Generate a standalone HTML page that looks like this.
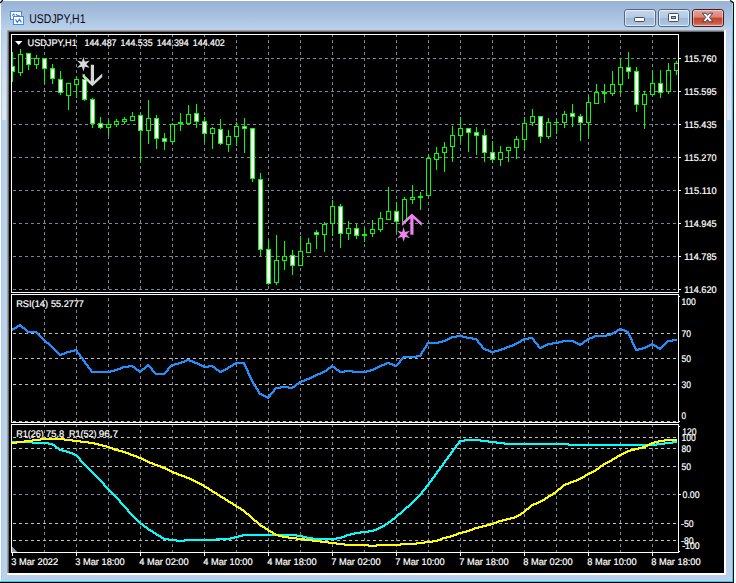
<!DOCTYPE html>
<html lang="en"><head><meta charset="utf-8"><title>USDJPY,H1</title>
<style>
html,body{margin:0;padding:0;background:#fff;overflow:hidden}
svg{display:block}
text{font-family:"Liberation Sans",sans-serif;fill:#fff;stroke:#fff;stroke-width:.2px;text-rendering:geometricPrecision}
.g{stroke:#778899;stroke-width:1;stroke-dasharray:3 3;fill:none}
.l{stroke:#c0c0c0;stroke-width:1;stroke-dasharray:3 3;fill:none}
.b{stroke:#fff;stroke-width:1;fill:none}
.c{fill:#00ff00}
.w{fill:#fff}
.k{fill:#000}
</style></head><body>
<svg width="736" height="583" viewBox="0 0 736 583">
<defs>
<linearGradient id="tb" x1="0" y1="0" x2="0" y2="1"><stop offset="0" stop-color="#98b2d4"/><stop offset="0.55" stop-color="#a9c2e0"/><stop offset="1" stop-color="#bad2ea"/></linearGradient>
<linearGradient id="bt" x1="0" y1="0" x2="0" y2="1"><stop offset="0" stop-color="#c4d6ec"/><stop offset="0.48" stop-color="#b4c9e3"/><stop offset="0.5" stop-color="#9db7d6"/><stop offset="1" stop-color="#b3cae5"/></linearGradient>
<linearGradient id="cl" x1="0" y1="0" x2="0" y2="1"><stop offset="0" stop-color="#eaa497"/><stop offset="0.45" stop-color="#d98576"/><stop offset="0.5" stop-color="#c0452b"/><stop offset="0.8" stop-color="#cb5a41"/><stop offset="1" stop-color="#e09a86"/></linearGradient>
<linearGradient id="gl" x1="0" y1="0" x2="0" y2="1"><stop offset="0" stop-color="#fff" stop-opacity="0"/><stop offset="0.5" stop-color="#fff" stop-opacity="0.3"/><stop offset="1" stop-color="#fff" stop-opacity="0.5"/></linearGradient>
<linearGradient id="gc" x1="0" y1="0" x2="0" y2="1"><stop offset="0" stop-color="#fff" stop-opacity="0.6"/><stop offset="1" stop-color="#fff" stop-opacity="0"/></linearGradient>
<clipPath id="m"><rect x="12" y="35" width="666" height="257"/></clipPath>
<clipPath id="r"><rect x="12" y="295" width="666" height="127"/></clipPath>
<clipPath id="s"><rect x="12" y="425" width="666" height="127"/></clipPath>
</defs>
<rect width="736" height="583" fill="#fff"/>

<path d="M1 583V4Q1 1 4 1H731Q734 1 734 4V583Z" fill="#000"/>
<path d="M1 582V4Q1 1 4 1H730Q733 1 733 4V582Z" fill="#2ccfff"/>
<path d="M1 581V4Q1 1 4 1H729Q732 1 732 4V581Z" fill="#b9d1ea"/>
<path d="M1 30V4Q1 1 4 1H729Q732 1 732 4V30Z" fill="url(#tb)"/>
<path d="M0 2.9L2.9 0M730.2 0.3L733.4 3.2" stroke="#1a1a1a" stroke-width="1.4" fill="none"/>
<rect x="732" y="3" width="1" height="30" fill="url(#gc)"/>
<rect x="2" y="30" width="4" height="90" fill="url(#gl)"/><rect x="727" y="30" width="5" height="90" fill="url(#gl)"/>
<g shape-rendering="crispEdges">
<rect x="0" y="581" width="2" height="1" fill="#2ccfff"/><rect x="0" y="582" width="2" height="1" fill="#000"/>
<rect x="1" y="30" width="1" height="551" fill="#afc8e6"/>
<rect x="731" y="30" width="1" height="551" fill="#c3cfe8"/><rect x="1" y="580" width="731" height="1" fill="#c3cfe8"/>
<rect x="7" y="30" width="719" height="545" fill="#fff"/>
<rect x="7" y="30" width="717" height="543" fill="#a0a0a0"/>
<rect x="8" y="31" width="716" height="542" fill="#696969"/>
<rect x="9" y="32" width="715" height="541" fill="#000"/>
<path class="g" clip-path="url(#m)" d="M44.5 34V292M76.5 34V292M108.5 34V292M140.5 34V292M172.5 34V292M204.5 34V292M236.5 34V292M268.5 34V292M300.5 34V292M332.5 34V292M364.5 34V292M396.5 34V292M428.5 34V292M460.5 34V292M492.5 34V292M524.5 34V292M556.5 34V292M588.5 34V292M620.5 34V292M652.5 34V292"/>
<path class="g" clip-path="url(#m)" d="M13 58.5H678M13 91.5H678M13 124.5H678M13 157.5H678M13 190.5H678M13 223.5H678M13 256.5H678M13 289.5H678"/>
<path class="g" clip-path="url(#r)" d="M44.5 292V422M76.5 292V422M108.5 292V422M140.5 292V422M172.5 292V422M204.5 292V422M236.5 292V422M268.5 292V422M300.5 292V422M332.5 292V422M364.5 292V422M396.5 292V422M428.5 292V422M460.5 292V422M492.5 292V422M524.5 292V422M556.5 292V422M588.5 292V422M620.5 292V422M652.5 292V422"/>
<path class="l" clip-path="url(#r)" d="M13 333.5H678M13 358.5H678M13 384.5H678M13 421.5H678"/>
<path class="g" clip-path="url(#s)" d="M44.5 424V552M76.5 424V552M108.5 424V552M140.5 424V552M172.5 424V552M204.5 424V552M236.5 424V552M268.5 424V552M300.5 424V552M332.5 424V552M364.5 424V552M396.5 424V552M428.5 424V552M460.5 424V552M492.5 424V552M524.5 424V552M556.5 424V552M588.5 424V552M620.5 424V552M652.5 424V552"/>
<path class="l" clip-path="url(#s)" d="M13 437.5H678M13 448.5H678M13 466.5H678M13 523.5H678M13 540.5H678"/>
<path class="g" d="M13 494.5H678"/>
<g clip-path="url(#m)">
<rect class="c" x="12" y="52" width="1" height="30"/>
<rect class="c" x="10" y="66" width="5" height="6"/>
<rect class="w" x="11" y="67" width="3" height="4"/>
<rect class="c" x="20" y="49" width="1" height="27"/>
<rect class="c" x="18" y="54" width="5" height="19"/>
<rect class="k" x="19" y="55" width="3" height="17"/>
<rect class="c" x="28" y="53" width="1" height="17"/>
<rect class="c" x="26" y="53" width="5" height="12"/>
<rect class="w" x="27" y="54" width="3" height="10"/>
<rect class="c" x="36" y="55" width="1" height="14"/>
<rect class="c" x="34" y="58" width="5" height="7"/>
<rect class="k" x="35" y="59" width="3" height="5"/>
<rect class="c" x="44" y="58" width="1" height="26"/>
<rect class="c" x="42" y="58" width="5" height="11"/>
<rect class="w" x="43" y="59" width="3" height="9"/>
<rect class="c" x="52" y="64" width="1" height="20"/>
<rect class="c" x="50" y="68" width="5" height="11"/>
<rect class="w" x="51" y="69" width="3" height="9"/>
<rect class="c" x="60" y="71" width="1" height="24"/>
<rect class="c" x="58" y="79" width="5" height="14"/>
<rect class="w" x="59" y="80" width="3" height="12"/>
<rect class="c" x="68" y="83" width="1" height="27"/>
<rect class="c" x="66" y="83" width="5" height="13"/>
<rect class="k" x="67" y="84" width="3" height="11"/>
<rect class="c" x="76" y="77" width="1" height="21"/>
<rect class="c" x="74" y="79" width="5" height="6"/>
<rect class="k" x="75" y="80" width="3" height="4"/>
<rect class="c" x="84" y="74" width="1" height="27"/>
<rect class="c" x="82" y="79" width="5" height="21"/>
<rect class="w" x="83" y="80" width="3" height="19"/>
<rect class="c" x="92" y="98" width="1" height="30"/>
<rect class="c" x="90" y="99" width="5" height="25"/>
<rect class="w" x="91" y="100" width="3" height="23"/>
<rect class="c" x="100" y="117" width="1" height="12"/>
<rect class="c" x="98" y="123" width="5" height="5"/>
<rect class="w" x="99" y="124" width="3" height="3"/>
<rect class="c" x="108" y="120" width="1" height="16"/>
<rect class="c" x="106" y="124" width="5" height="4"/>
<rect class="k" x="107" y="125" width="3" height="2"/>
<rect class="c" x="116" y="119" width="1" height="8"/>
<rect class="c" x="114" y="121" width="5" height="4"/>
<rect class="k" x="115" y="122" width="3" height="2"/>
<rect class="c" x="124" y="117" width="1" height="7"/>
<rect class="c" x="122" y="119" width="5" height="3"/>
<rect class="k" x="123" y="120" width="3" height="1"/>
<rect class="c" x="132" y="112" width="1" height="9"/>
<rect class="c" x="130" y="116" width="5" height="5"/>
<rect class="k" x="131" y="117" width="3" height="3"/>
<rect class="c" x="140" y="114" width="1" height="48"/>
<rect class="c" x="138" y="115" width="5" height="16"/>
<rect class="w" x="139" y="116" width="3" height="14"/>
<rect class="c" x="148" y="100" width="1" height="44"/>
<rect class="c" x="146" y="118" width="5" height="13"/>
<rect class="k" x="147" y="119" width="3" height="11"/>
<rect class="c" x="156" y="115" width="1" height="34"/>
<rect class="c" x="154" y="118" width="5" height="21"/>
<rect class="w" x="155" y="119" width="3" height="19"/>
<rect class="c" x="164" y="133" width="1" height="17"/>
<rect class="c" x="162" y="138" width="5" height="4"/>
<rect class="w" x="163" y="139" width="3" height="2"/>
<rect class="c" x="172" y="123" width="1" height="21"/>
<rect class="c" x="170" y="124" width="5" height="18"/>
<rect class="k" x="171" y="125" width="3" height="16"/>
<rect class="c" x="180" y="113" width="1" height="18"/>
<rect class="c" x="178" y="122" width="5" height="2"/>
<rect class="c" x="188" y="105" width="1" height="20"/>
<rect class="c" x="186" y="114" width="5" height="10"/>
<rect class="k" x="187" y="115" width="3" height="8"/>
<rect class="c" x="196" y="104" width="1" height="24"/>
<rect class="c" x="194" y="113" width="5" height="9"/>
<rect class="w" x="195" y="114" width="3" height="7"/>
<rect class="c" x="204" y="117" width="1" height="25"/>
<rect class="c" x="202" y="121" width="5" height="13"/>
<rect class="w" x="203" y="122" width="3" height="11"/>
<rect class="c" x="212" y="127" width="1" height="22"/>
<rect class="c" x="210" y="128" width="5" height="6"/>
<rect class="k" x="211" y="129" width="3" height="4"/>
<rect class="c" x="220" y="119" width="1" height="26"/>
<rect class="c" x="218" y="129" width="5" height="15"/>
<rect class="w" x="219" y="130" width="3" height="13"/>
<rect class="c" x="228" y="130" width="1" height="22"/>
<rect class="c" x="226" y="136" width="5" height="9"/>
<rect class="k" x="227" y="137" width="3" height="7"/>
<rect class="c" x="236" y="122" width="1" height="24"/>
<rect class="c" x="234" y="126" width="5" height="11"/>
<rect class="k" x="235" y="127" width="3" height="9"/>
<rect class="c" x="244" y="118" width="1" height="35"/>
<rect class="c" x="242" y="126" width="5" height="3"/>
<rect class="w" x="243" y="127" width="3" height="1"/>
<rect class="c" x="252" y="128" width="1" height="54"/>
<rect class="c" x="250" y="128" width="5" height="51"/>
<rect class="w" x="251" y="129" width="3" height="49"/>
<rect class="c" x="260" y="173" width="1" height="83"/>
<rect class="c" x="258" y="179" width="5" height="71"/>
<rect class="w" x="259" y="180" width="3" height="69"/>
<rect class="c" x="268" y="240" width="1" height="45"/>
<rect class="c" x="266" y="249" width="5" height="35"/>
<rect class="w" x="267" y="250" width="3" height="33"/>
<rect class="c" x="276" y="235" width="1" height="50"/>
<rect class="c" x="274" y="260" width="5" height="23"/>
<rect class="k" x="275" y="261" width="3" height="21"/>
<rect class="c" x="284" y="241" width="1" height="29"/>
<rect class="c" x="282" y="256" width="5" height="5"/>
<rect class="k" x="283" y="257" width="3" height="3"/>
<rect class="c" x="292" y="250" width="1" height="25"/>
<rect class="c" x="290" y="255" width="5" height="11"/>
<rect class="w" x="291" y="256" width="3" height="9"/>
<rect class="c" x="300" y="236" width="1" height="30"/>
<rect class="c" x="298" y="251" width="5" height="15"/>
<rect class="k" x="299" y="252" width="3" height="13"/>
<rect class="c" x="308" y="238" width="1" height="15"/>
<rect class="c" x="306" y="243" width="5" height="10"/>
<rect class="k" x="307" y="244" width="3" height="8"/>
<rect class="c" x="316" y="230" width="1" height="19"/>
<rect class="c" x="314" y="232" width="5" height="3"/>
<rect class="w" x="315" y="233" width="3" height="1"/>
<rect class="c" x="324" y="222" width="1" height="30"/>
<rect class="c" x="322" y="224" width="5" height="11"/>
<rect class="k" x="323" y="225" width="3" height="9"/>
<rect class="c" x="332" y="200" width="1" height="36"/>
<rect class="c" x="330" y="206" width="5" height="18"/>
<rect class="k" x="331" y="207" width="3" height="16"/>
<rect class="c" x="340" y="204" width="1" height="44"/>
<rect class="c" x="338" y="206" width="5" height="28"/>
<rect class="w" x="339" y="207" width="3" height="26"/>
<rect class="c" x="348" y="221" width="1" height="19"/>
<rect class="c" x="346" y="228" width="5" height="6"/>
<rect class="k" x="347" y="229" width="3" height="4"/>
<rect class="c" x="356" y="224" width="1" height="15"/>
<rect class="c" x="354" y="228" width="5" height="8"/>
<rect class="w" x="355" y="229" width="3" height="6"/>
<rect class="c" x="364" y="228" width="1" height="14"/>
<rect class="c" x="362" y="234" width="5" height="2"/>
<rect class="c" x="372" y="220" width="1" height="17"/>
<rect class="c" x="370" y="229" width="5" height="5"/>
<rect class="k" x="371" y="230" width="3" height="3"/>
<rect class="c" x="380" y="212" width="1" height="20"/>
<rect class="c" x="378" y="218" width="5" height="12"/>
<rect class="k" x="379" y="219" width="3" height="10"/>
<rect class="c" x="388" y="187" width="1" height="33"/>
<rect class="c" x="386" y="211" width="5" height="9"/>
<rect class="k" x="387" y="212" width="3" height="7"/>
<rect class="c" x="396" y="202" width="1" height="31"/>
<rect class="c" x="394" y="211" width="5" height="11"/>
<rect class="w" x="395" y="212" width="3" height="9"/>
<rect class="c" x="404" y="197" width="1" height="25"/>
<rect class="c" x="402" y="199" width="5" height="23"/>
<rect class="k" x="403" y="200" width="3" height="21"/>
<rect class="c" x="412" y="185" width="1" height="19"/>
<rect class="c" x="410" y="197" width="5" height="3"/>
<rect class="k" x="411" y="198" width="3" height="1"/>
<rect class="c" x="420" y="192" width="1" height="18"/>
<rect class="c" x="418" y="196" width="5" height="2"/>
<rect class="c" x="428" y="154" width="1" height="42"/>
<rect class="c" x="426" y="158" width="5" height="38"/>
<rect class="k" x="427" y="159" width="3" height="36"/>
<rect class="c" x="436" y="147" width="1" height="23"/>
<rect class="c" x="434" y="153" width="5" height="7"/>
<rect class="k" x="435" y="154" width="3" height="5"/>
<rect class="c" x="444" y="142" width="1" height="30"/>
<rect class="c" x="442" y="147" width="5" height="6"/>
<rect class="k" x="443" y="148" width="3" height="4"/>
<rect class="c" x="452" y="126" width="1" height="36"/>
<rect class="c" x="450" y="135" width="5" height="12"/>
<rect class="k" x="451" y="136" width="3" height="10"/>
<rect class="c" x="460" y="117" width="1" height="25"/>
<rect class="c" x="458" y="128" width="5" height="8"/>
<rect class="k" x="459" y="129" width="3" height="6"/>
<rect class="c" x="468" y="128" width="1" height="24"/>
<rect class="c" x="466" y="128" width="5" height="5"/>
<rect class="w" x="467" y="129" width="3" height="3"/>
<rect class="c" x="476" y="127" width="1" height="28"/>
<rect class="c" x="474" y="132" width="5" height="4"/>
<rect class="w" x="475" y="133" width="3" height="2"/>
<rect class="c" x="484" y="129" width="1" height="33"/>
<rect class="c" x="482" y="135" width="5" height="18"/>
<rect class="w" x="483" y="136" width="3" height="16"/>
<rect class="c" x="492" y="141" width="1" height="22"/>
<rect class="c" x="490" y="152" width="5" height="8"/>
<rect class="w" x="491" y="153" width="3" height="6"/>
<rect class="c" x="500" y="146" width="1" height="20"/>
<rect class="c" x="498" y="152" width="5" height="8"/>
<rect class="k" x="499" y="153" width="3" height="6"/>
<rect class="c" x="508" y="147" width="1" height="15"/>
<rect class="c" x="506" y="147" width="5" height="4"/>
<rect class="k" x="507" y="148" width="3" height="2"/>
<rect class="c" x="516" y="136" width="1" height="23"/>
<rect class="c" x="514" y="139" width="5" height="9"/>
<rect class="k" x="515" y="140" width="3" height="7"/>
<rect class="c" x="524" y="117" width="1" height="32"/>
<rect class="c" x="522" y="123" width="5" height="17"/>
<rect class="k" x="523" y="124" width="3" height="15"/>
<rect class="c" x="532" y="109" width="1" height="17"/>
<rect class="c" x="530" y="116" width="5" height="7"/>
<rect class="k" x="531" y="117" width="3" height="5"/>
<rect class="c" x="540" y="116" width="1" height="27"/>
<rect class="c" x="538" y="116" width="5" height="21"/>
<rect class="w" x="539" y="117" width="3" height="19"/>
<rect class="c" x="548" y="118" width="1" height="21"/>
<rect class="c" x="546" y="122" width="5" height="15"/>
<rect class="k" x="547" y="123" width="3" height="13"/>
<rect class="c" x="556" y="119" width="1" height="15"/>
<rect class="c" x="554" y="122" width="5" height="1"/>
<rect class="c" x="564" y="111" width="1" height="17"/>
<rect class="c" x="562" y="114" width="5" height="9"/>
<rect class="k" x="563" y="115" width="3" height="7"/>
<rect class="c" x="572" y="104" width="1" height="23"/>
<rect class="c" x="570" y="113" width="5" height="4"/>
<rect class="w" x="571" y="114" width="3" height="2"/>
<rect class="c" x="580" y="114" width="1" height="27"/>
<rect class="c" x="578" y="116" width="5" height="7"/>
<rect class="w" x="579" y="117" width="3" height="5"/>
<rect class="c" x="588" y="95" width="1" height="42"/>
<rect class="c" x="586" y="102" width="5" height="21"/>
<rect class="k" x="587" y="103" width="3" height="19"/>
<rect class="c" x="596" y="84" width="1" height="20"/>
<rect class="c" x="594" y="92" width="5" height="12"/>
<rect class="k" x="595" y="93" width="3" height="10"/>
<rect class="c" x="604" y="84" width="1" height="19"/>
<rect class="c" x="602" y="92" width="5" height="2"/>
<rect class="c" x="612" y="71" width="1" height="25"/>
<rect class="c" x="610" y="84" width="5" height="10"/>
<rect class="k" x="611" y="85" width="3" height="8"/>
<rect class="c" x="620" y="59" width="1" height="35"/>
<rect class="c" x="618" y="67" width="5" height="18"/>
<rect class="k" x="619" y="68" width="3" height="16"/>
<rect class="c" x="628" y="52" width="1" height="27"/>
<rect class="c" x="626" y="67" width="5" height="5"/>
<rect class="w" x="627" y="68" width="3" height="3"/>
<rect class="c" x="636" y="67" width="1" height="45"/>
<rect class="c" x="634" y="71" width="5" height="34"/>
<rect class="w" x="635" y="72" width="3" height="32"/>
<rect class="c" x="644" y="91" width="1" height="38"/>
<rect class="c" x="642" y="94" width="5" height="11"/>
<rect class="k" x="643" y="95" width="3" height="9"/>
<rect class="c" x="652" y="70" width="1" height="25"/>
<rect class="c" x="650" y="83" width="5" height="12"/>
<rect class="k" x="651" y="84" width="3" height="10"/>
<rect class="c" x="660" y="70" width="1" height="28"/>
<rect class="c" x="658" y="83" width="5" height="10"/>
<rect class="w" x="659" y="84" width="3" height="8"/>
<rect class="c" x="668" y="63" width="1" height="31"/>
<rect class="c" x="666" y="70" width="5" height="22"/>
<rect class="k" x="667" y="71" width="3" height="20"/>
<rect class="c" x="676" y="61" width="1" height="14"/>
<rect class="c" x="674" y="63" width="5" height="8"/>
<rect class="k" x="675" y="64" width="3" height="6"/>
</g>
</g>
<polygon points="83.40,56.90 84.85,61.69 89.72,60.55 86.30,64.20 89.72,67.85 84.85,66.71 83.40,71.50 81.95,66.71 77.08,67.85 80.50,64.20 77.08,60.55 81.95,61.69" fill="#d8d8d8"/>
<polygon points="92.4,86.2 102.2,77.0 102.2,73.6 94.0,81.2 94.0,64.8 90.8,64.8 90.8,81.2 82.6,73.6 82.6,77.0" fill="#d6d6d6"/>
<polygon points="403.60,227.10 405.05,231.89 409.92,230.75 406.50,234.40 409.92,238.05 405.05,236.91 403.60,241.70 402.15,236.91 397.28,238.05 400.70,234.40 397.28,230.75 402.15,231.89" fill="#ee82ee"/>
<polygon points="411.9,213.4 421.7,222.6 421.7,226.0 413.5,218.4 413.5,234.8 410.3,234.8 410.3,218.4 402.1,226.0 402.1,222.6" fill="#ee82ee"/>
<path shape-rendering="crispEdges" clip-path="url(#r)" d="M11 329h1v2h-1zM12 328h1v3h-1zM13 328h1v2h-1zM14 327h1v3h-1zM15 327h1v2h-1zM16 326h1v3h-1zM17 325h1v3h-1zM18 325h1v2h-1zM19 324h1v3h-1zM20 324h1v3h-1zM21 325h1v3h-1zM22 326h1v3h-1zM23 327h1v2h-1zM24 327h1v3h-1zM25 328h1v3h-1zM26 329h1v3h-1zM27 330h1v3h-1zM28 331h1v2h-1zM29 331h1v2h-1zM30 331h1v2h-1zM31 331h1v2h-1zM32 331h1v2h-1zM33 331h1v2h-1zM34 331h1v2h-1zM35 331h1v2h-1zM36 331h1v3h-1zM37 332h1v3h-1zM38 333h1v3h-1zM39 334h1v3h-1zM40 335h1v3h-1zM41 336h1v3h-1zM42 337h1v3h-1zM43 338h1v3h-1zM44 339h1v3h-1zM45 340h1v3h-1zM46 341h1v3h-1zM47 342h1v2h-1zM48 342h1v3h-1zM49 343h1v3h-1zM50 344h1v3h-1zM51 345h1v3h-1zM52 346h1v3h-1zM53 347h1v3h-1zM54 348h1v3h-1zM55 349h1v3h-1zM56 350h1v3h-1zM57 351h1v3h-1zM58 352h1v3h-1zM59 353h1v3h-1zM60 354h1v2h-1zM61 353h1v3h-1zM62 353h1v2h-1zM63 353h1v2h-1zM64 352h1v3h-1zM65 352h1v2h-1zM66 351h1v3h-1zM67 351h1v2h-1zM68 351h1v2h-1zM69 351h1v2h-1zM70 350h1v3h-1zM71 350h1v2h-1zM72 350h1v2h-1zM73 350h1v2h-1zM74 349h1v3h-1zM75 349h1v2h-1zM76 349h1v4h-1zM77 350h1v4h-1zM78 352h1v3h-1zM79 353h1v4h-1zM80 354h1v4h-1zM81 356h1v3h-1zM82 357h1v4h-1zM83 358h1v4h-1zM84 360h1v4h-1zM85 361h1v4h-1zM86 363h1v3h-1zM87 364h1v4h-1zM88 365h1v4h-1zM89 367h1v3h-1zM90 368h1v4h-1zM91 369h1v4h-1zM92 371h1v2h-1zM93 371h1v2h-1zM94 371h1v2h-1zM95 371h1v2h-1zM96 371h1v2h-1zM97 371h1v2h-1zM98 371h1v2h-1zM99 371h1v2h-1zM100 371h1v2h-1zM101 371h1v2h-1zM102 371h1v2h-1zM103 371h1v2h-1zM104 371h1v2h-1zM105 371h1v2h-1zM106 371h1v2h-1zM107 371h1v2h-1zM108 371h1v2h-1zM109 371h1v2h-1zM110 370h1v3h-1zM111 370h1v2h-1zM112 370h1v2h-1zM113 370h1v2h-1zM114 369h1v3h-1zM115 369h1v2h-1zM116 369h1v2h-1zM117 368h1v3h-1zM118 368h1v2h-1zM119 368h1v2h-1zM120 367h1v3h-1zM121 367h1v2h-1zM122 366h1v3h-1zM123 366h1v2h-1zM124 366h1v2h-1zM125 366h1v2h-1zM126 366h1v2h-1zM127 366h1v2h-1zM128 365h1v3h-1zM129 365h1v2h-1zM130 365h1v2h-1zM131 365h1v2h-1zM132 365h1v3h-1zM133 366h1v2h-1zM134 366h1v3h-1zM135 367h1v3h-1zM136 368h1v3h-1zM137 369h1v2h-1zM138 369h1v3h-1zM139 370h1v3h-1zM140 370h1v3h-1zM141 369h1v3h-1zM142 368h1v3h-1zM143 368h1v2h-1zM144 367h1v3h-1zM145 366h1v3h-1zM146 365h1v3h-1zM147 364h1v3h-1zM148 364h1v3h-1zM149 365h1v3h-1zM150 366h1v3h-1zM151 367h1v4h-1zM152 368h1v4h-1zM153 370h1v3h-1zM154 371h1v3h-1zM155 372h1v3h-1zM156 373h1v2h-1zM157 373h1v2h-1zM158 373h1v2h-1zM159 373h1v2h-1zM160 373h1v2h-1zM161 373h1v2h-1zM162 373h1v2h-1zM163 373h1v2h-1zM164 372h1v3h-1zM165 371h1v3h-1zM166 370h1v3h-1zM167 368h1v4h-1zM168 367h1v4h-1zM169 366h1v3h-1zM170 365h1v3h-1zM171 364h1v3h-1zM172 364h1v2h-1zM173 364h1v2h-1zM174 363h1v3h-1zM175 363h1v2h-1zM176 363h1v2h-1zM177 363h1v2h-1zM178 362h1v3h-1zM179 362h1v2h-1zM180 362h1v2h-1zM181 361h1v3h-1zM182 361h1v2h-1zM183 361h1v2h-1zM184 360h1v3h-1zM185 360h1v2h-1zM186 359h1v3h-1zM187 359h1v2h-1zM188 359h1v2h-1zM189 359h1v3h-1zM190 360h1v2h-1zM191 360h1v2h-1zM192 360h1v3h-1zM193 361h1v2h-1zM194 361h1v3h-1zM195 362h1v2h-1zM196 362h1v2h-1zM197 362h1v3h-1zM198 363h1v2h-1zM199 363h1v3h-1zM200 364h1v2h-1zM201 364h1v3h-1zM202 365h1v2h-1zM203 365h1v3h-1zM204 366h1v2h-1zM205 366h1v2h-1zM206 366h1v2h-1zM207 366h1v2h-1zM208 365h1v3h-1zM209 365h1v2h-1zM210 365h1v2h-1zM211 365h1v2h-1zM212 365h1v3h-1zM213 366h1v2h-1zM214 366h1v3h-1zM215 367h1v3h-1zM216 368h1v3h-1zM217 369h1v2h-1zM218 369h1v3h-1zM219 370h1v3h-1zM220 371h1v2h-1zM221 370h1v3h-1zM222 370h1v2h-1zM223 369h1v3h-1zM224 369h1v2h-1zM225 368h1v3h-1zM226 368h1v2h-1zM227 367h1v3h-1zM228 366h1v3h-1zM229 366h1v2h-1zM230 365h1v3h-1zM231 365h1v2h-1zM232 364h1v3h-1zM233 363h1v3h-1zM234 363h1v2h-1zM235 362h1v3h-1zM236 362h1v2h-1zM237 362h1v2h-1zM238 362h1v2h-1zM239 362h1v2h-1zM240 362h1v2h-1zM241 362h1v2h-1zM242 362h1v2h-1zM243 362h1v3h-1zM244 362h1v5h-1zM245 364h1v5h-1zM246 366h1v5h-1zM247 368h1v6h-1zM248 370h1v6h-1zM249 373h1v5h-1zM250 375h1v5h-1zM251 377h1v5h-1zM252 379h1v5h-1zM253 381h1v5h-1zM254 383h1v4h-1zM255 385h1v4h-1zM256 386h1v4h-1zM257 388h1v4h-1zM258 389h1v5h-1zM259 391h1v4h-1zM260 393h1v2h-1zM261 393h1v3h-1zM262 394h1v2h-1zM263 394h1v3h-1zM264 395h1v2h-1zM265 395h1v3h-1zM266 396h1v2h-1zM267 396h1v3h-1zM268 396h1v3h-1zM269 394h1v4h-1zM270 393h1v4h-1zM271 392h1v3h-1zM272 391h1v3h-1zM273 389h1v4h-1zM274 388h1v4h-1zM275 387h1v3h-1zM276 387h1v2h-1zM277 387h1v2h-1zM278 387h1v2h-1zM279 387h1v2h-1zM280 386h1v3h-1zM281 386h1v2h-1zM282 386h1v2h-1zM283 386h1v2h-1zM284 386h1v2h-1zM285 386h1v2h-1zM286 386h1v2h-1zM287 386h1v2h-1zM288 386h1v3h-1zM289 387h1v2h-1zM290 387h1v2h-1zM291 387h1v2h-1zM292 386h1v3h-1zM293 386h1v2h-1zM294 385h1v3h-1zM295 384h1v3h-1zM296 383h1v3h-1zM297 383h1v2h-1zM298 382h1v3h-1zM299 381h1v3h-1zM300 381h1v2h-1zM301 380h1v3h-1zM302 380h1v2h-1zM303 380h1v2h-1zM304 379h1v3h-1zM305 379h1v2h-1zM306 378h1v3h-1zM307 378h1v2h-1zM308 378h1v2h-1zM309 377h1v3h-1zM310 377h1v2h-1zM311 376h1v3h-1zM312 376h1v2h-1zM313 375h1v3h-1zM314 375h1v2h-1zM315 374h1v3h-1zM316 374h1v2h-1zM317 373h1v3h-1zM318 373h1v2h-1zM319 373h1v2h-1zM320 372h1v3h-1zM321 372h1v2h-1zM322 371h1v3h-1zM323 371h1v2h-1zM324 370h1v3h-1zM325 370h1v2h-1zM326 369h1v3h-1zM327 368h1v3h-1zM328 367h1v3h-1zM329 367h1v2h-1zM330 366h1v3h-1zM331 365h1v3h-1zM332 365h1v3h-1zM333 366h1v2h-1zM334 366h1v3h-1zM335 367h1v3h-1zM336 368h1v3h-1zM337 369h1v2h-1zM338 369h1v3h-1zM339 370h1v3h-1zM340 371h1v2h-1zM341 371h1v2h-1zM342 371h1v2h-1zM343 371h1v2h-1zM344 370h1v3h-1zM345 370h1v2h-1zM346 370h1v2h-1zM347 370h1v2h-1zM348 370h1v2h-1zM349 370h1v2h-1zM350 370h1v2h-1zM351 370h1v2h-1zM352 370h1v3h-1zM353 371h1v2h-1zM354 371h1v2h-1zM355 371h1v2h-1zM356 371h1v2h-1zM357 371h1v2h-1zM358 371h1v2h-1zM359 371h1v2h-1zM360 371h1v2h-1zM361 371h1v2h-1zM362 371h1v2h-1zM363 371h1v2h-1zM364 371h1v2h-1zM365 371h1v2h-1zM366 370h1v3h-1zM367 370h1v2h-1zM368 370h1v2h-1zM369 370h1v2h-1zM370 369h1v3h-1zM371 369h1v2h-1zM372 369h1v2h-1zM373 368h1v3h-1zM374 368h1v2h-1zM375 367h1v3h-1zM376 367h1v2h-1zM377 366h1v3h-1zM378 366h1v2h-1zM379 365h1v3h-1zM380 365h1v2h-1zM381 364h1v3h-1zM382 364h1v2h-1zM383 364h1v2h-1zM384 363h1v3h-1zM385 363h1v2h-1zM386 362h1v3h-1zM387 362h1v2h-1zM388 362h1v2h-1zM389 362h1v3h-1zM390 363h1v2h-1zM391 363h1v2h-1zM392 363h1v3h-1zM393 364h1v2h-1zM394 364h1v3h-1zM395 365h1v2h-1zM396 364h1v3h-1zM397 363h1v3h-1zM398 362h1v3h-1zM399 360h1v4h-1zM400 359h1v4h-1zM401 358h1v3h-1zM402 357h1v3h-1zM403 356h1v3h-1zM404 356h1v2h-1zM405 356h1v2h-1zM406 356h1v2h-1zM407 356h1v2h-1zM408 356h1v2h-1zM409 356h1v2h-1zM410 356h1v2h-1zM411 356h1v2h-1zM412 356h1v2h-1zM413 356h1v2h-1zM414 356h1v2h-1zM415 356h1v2h-1zM416 355h1v3h-1zM417 355h1v2h-1zM418 355h1v2h-1zM419 355h1v2h-1zM420 353h1v4h-1zM421 351h1v5h-1zM422 350h1v4h-1zM423 348h1v4h-1zM424 347h1v4h-1zM425 345h1v4h-1zM426 343h1v5h-1zM427 342h1v4h-1zM428 342h1v2h-1zM429 342h1v2h-1zM430 342h1v2h-1zM431 342h1v2h-1zM432 342h1v2h-1zM433 342h1v2h-1zM434 342h1v2h-1zM435 342h1v2h-1zM436 342h1v2h-1zM437 342h1v2h-1zM438 341h1v3h-1zM439 341h1v2h-1zM440 341h1v2h-1zM441 341h1v2h-1zM442 340h1v3h-1zM443 340h1v2h-1zM444 340h1v2h-1zM445 339h1v3h-1zM446 339h1v2h-1zM447 338h1v3h-1zM448 338h1v2h-1zM449 337h1v3h-1zM450 337h1v2h-1zM451 336h1v3h-1zM452 336h1v2h-1zM453 336h1v2h-1zM454 336h1v2h-1zM455 336h1v2h-1zM456 335h1v3h-1zM457 335h1v2h-1zM458 335h1v2h-1zM459 335h1v2h-1zM460 335h1v2h-1zM461 335h1v2h-1zM462 335h1v3h-1zM463 336h1v2h-1zM464 336h1v2h-1zM465 336h1v2h-1zM466 336h1v3h-1zM467 337h1v2h-1zM468 337h1v2h-1zM469 337h1v2h-1zM470 337h1v2h-1zM471 337h1v2h-1zM472 337h1v3h-1zM473 338h1v2h-1zM474 338h1v2h-1zM475 338h1v2h-1zM476 338h1v3h-1zM477 339h1v4h-1zM478 340h1v4h-1zM479 342h1v3h-1zM480 343h1v3h-1zM481 344h1v4h-1zM482 345h1v4h-1zM483 347h1v3h-1zM484 348h1v2h-1zM485 348h1v3h-1zM486 349h1v2h-1zM487 349h1v2h-1zM488 349h1v3h-1zM489 350h1v2h-1zM490 350h1v3h-1zM491 351h1v2h-1zM492 351h1v2h-1zM493 351h1v2h-1zM494 350h1v3h-1zM495 350h1v2h-1zM496 350h1v2h-1zM497 350h1v2h-1zM498 349h1v3h-1zM499 349h1v2h-1zM500 349h1v2h-1zM501 348h1v3h-1zM502 348h1v2h-1zM503 348h1v2h-1zM504 347h1v3h-1zM505 347h1v2h-1zM506 346h1v3h-1zM507 346h1v2h-1zM508 346h1v2h-1zM509 345h1v3h-1zM510 345h1v2h-1zM511 345h1v2h-1zM512 344h1v3h-1zM513 344h1v2h-1zM514 343h1v3h-1zM515 343h1v2h-1zM516 342h1v3h-1zM517 342h1v2h-1zM518 341h1v3h-1zM519 341h1v2h-1zM520 340h1v3h-1zM521 339h1v3h-1zM522 339h1v2h-1zM523 338h1v3h-1zM524 338h1v2h-1zM525 338h1v2h-1zM526 338h1v2h-1zM527 338h1v2h-1zM528 337h1v3h-1zM529 337h1v2h-1zM530 337h1v2h-1zM531 337h1v2h-1zM532 337h1v3h-1zM533 338h1v4h-1zM534 339h1v4h-1zM535 341h1v3h-1zM536 342h1v3h-1zM537 343h1v4h-1zM538 344h1v4h-1zM539 346h1v3h-1zM540 347h1v2h-1zM541 346h1v3h-1zM542 346h1v2h-1zM543 345h1v3h-1zM544 345h1v2h-1zM545 344h1v3h-1zM546 344h1v2h-1zM547 343h1v3h-1zM548 343h1v2h-1zM549 343h1v2h-1zM550 343h1v2h-1zM551 343h1v2h-1zM552 342h1v3h-1zM553 342h1v2h-1zM554 342h1v2h-1zM555 342h1v2h-1zM556 342h1v2h-1zM557 342h1v2h-1zM558 341h1v3h-1zM559 341h1v2h-1zM560 341h1v2h-1zM561 341h1v2h-1zM562 340h1v3h-1zM563 340h1v2h-1zM564 340h1v2h-1zM565 340h1v2h-1zM566 340h1v2h-1zM567 340h1v2h-1zM568 340h1v2h-1zM569 340h1v2h-1zM570 340h1v2h-1zM571 340h1v2h-1zM572 340h1v2h-1zM573 340h1v3h-1zM574 341h1v2h-1zM575 341h1v3h-1zM576 342h1v2h-1zM577 342h1v3h-1zM578 343h1v2h-1zM579 343h1v3h-1zM580 343h1v3h-1zM581 343h1v2h-1zM582 342h1v3h-1zM583 341h1v3h-1zM584 340h1v3h-1zM585 340h1v2h-1zM586 339h1v3h-1zM587 338h1v3h-1zM588 338h1v2h-1zM589 337h1v3h-1zM590 337h1v2h-1zM591 337h1v2h-1zM592 336h1v3h-1zM593 336h1v2h-1zM594 335h1v3h-1zM595 335h1v2h-1zM596 335h1v2h-1zM597 335h1v2h-1zM598 335h1v2h-1zM599 335h1v2h-1zM600 335h1v2h-1zM601 335h1v2h-1zM602 335h1v2h-1zM603 335h1v2h-1zM604 335h1v2h-1zM605 335h1v2h-1zM606 334h1v3h-1zM607 334h1v2h-1zM608 334h1v2h-1zM609 334h1v2h-1zM610 333h1v3h-1zM611 333h1v2h-1zM612 332h1v3h-1zM613 332h1v2h-1zM614 331h1v3h-1zM615 331h1v2h-1zM616 330h1v3h-1zM617 329h1v3h-1zM618 329h1v2h-1zM619 328h1v3h-1zM620 328h1v2h-1zM621 328h1v3h-1zM622 329h1v2h-1zM623 329h1v2h-1zM624 329h1v3h-1zM625 330h1v2h-1zM626 330h1v3h-1zM627 331h1v3h-1zM628 331h1v5h-1zM629 333h1v5h-1zM630 335h1v5h-1zM631 337h1v6h-1zM632 339h1v6h-1zM633 342h1v5h-1zM634 344h1v5h-1zM635 346h1v5h-1zM636 348h1v3h-1zM637 349h1v2h-1zM638 348h1v3h-1zM639 348h1v2h-1zM640 348h1v2h-1zM641 348h1v2h-1zM642 347h1v3h-1zM643 347h1v2h-1zM644 347h1v2h-1zM645 346h1v3h-1zM646 346h1v2h-1zM647 345h1v3h-1zM648 345h1v2h-1zM649 344h1v3h-1zM650 344h1v2h-1zM651 343h1v3h-1zM652 343h1v3h-1zM653 344h1v2h-1zM654 344h1v3h-1zM655 345h1v2h-1zM656 345h1v3h-1zM657 346h1v3h-1zM658 347h1v2h-1zM659 347h1v3h-1zM660 347h1v3h-1zM661 346h1v3h-1zM662 345h1v3h-1zM663 344h1v3h-1zM664 343h1v3h-1zM665 342h1v3h-1zM666 341h1v3h-1zM667 340h1v3h-1zM668 340h1v2h-1zM669 340h1v2h-1zM670 340h1v2h-1zM671 340h1v2h-1zM672 339h1v3h-1zM673 339h1v2h-1zM674 339h1v2h-1zM675 339h1v2h-1zM676 339h1v2h-1z" fill="#1e90ff"/>
<path shape-rendering="crispEdges" clip-path="url(#s)" d="M11 441h1v2h-1zM12 441h1v2h-1zM13 441h1v2h-1zM14 441h1v2h-1zM15 441h1v2h-1zM16 441h1v2h-1zM17 441h1v2h-1zM18 441h1v2h-1zM19 441h1v2h-1zM20 441h1v2h-1zM21 441h1v2h-1zM22 441h1v2h-1zM23 441h1v2h-1zM24 441h1v2h-1zM25 441h1v2h-1zM26 441h1v2h-1zM27 441h1v2h-1zM28 441h1v2h-1zM29 441h1v2h-1zM30 441h1v2h-1zM31 441h1v2h-1zM32 441h1v3h-1zM33 442h1v2h-1zM34 442h1v2h-1zM35 442h1v2h-1zM36 442h1v2h-1zM37 442h1v2h-1zM38 442h1v2h-1zM39 442h1v2h-1zM40 442h1v2h-1zM41 442h1v2h-1zM42 442h1v2h-1zM43 442h1v2h-1zM44 442h1v2h-1zM45 442h1v2h-1zM46 442h1v2h-1zM47 442h1v2h-1zM48 442h1v3h-1zM49 443h1v2h-1zM50 443h1v2h-1zM51 443h1v2h-1zM52 443h1v3h-1zM53 444h1v2h-1zM54 444h1v3h-1zM55 445h1v3h-1zM56 446h1v3h-1zM57 447h1v2h-1zM58 447h1v3h-1zM59 448h1v3h-1zM60 449h1v2h-1zM61 449h1v2h-1zM62 449h1v3h-1zM63 450h1v2h-1zM64 450h1v2h-1zM65 450h1v2h-1zM66 450h1v3h-1zM67 451h1v2h-1zM68 451h1v2h-1zM69 451h1v3h-1zM70 452h1v2h-1zM71 452h1v2h-1zM72 452h1v3h-1zM73 453h1v2h-1zM74 453h1v3h-1zM75 454h1v2h-1zM76 454h1v3h-1zM77 455h1v3h-1zM78 456h1v3h-1zM79 457h1v4h-1zM80 458h1v4h-1zM81 460h1v3h-1zM82 461h1v3h-1zM83 462h1v3h-1zM84 463h1v3h-1zM85 464h1v3h-1zM86 465h1v3h-1zM87 466h1v3h-1zM88 467h1v3h-1zM89 468h1v3h-1zM90 469h1v3h-1zM91 470h1v3h-1zM92 471h1v3h-1zM93 472h1v3h-1zM94 473h1v3h-1zM95 474h1v3h-1zM96 475h1v3h-1zM97 476h1v3h-1zM98 477h1v3h-1zM99 478h1v3h-1zM100 479h1v3h-1zM101 480h1v3h-1zM102 481h1v3h-1zM103 482h1v4h-1zM104 483h1v4h-1zM105 485h1v3h-1zM106 486h1v3h-1zM107 487h1v3h-1zM108 488h1v3h-1zM109 489h1v3h-1zM110 490h1v3h-1zM111 491h1v3h-1zM112 492h1v3h-1zM113 493h1v3h-1zM114 494h1v3h-1zM115 495h1v3h-1zM116 496h1v3h-1zM117 497h1v3h-1zM118 498h1v3h-1zM119 499h1v4h-1zM120 500h1v4h-1zM121 502h1v3h-1zM122 503h1v3h-1zM123 504h1v3h-1zM124 505h1v3h-1zM125 506h1v3h-1zM126 507h1v3h-1zM127 508h1v4h-1zM128 509h1v4h-1zM129 511h1v3h-1zM130 512h1v3h-1zM131 513h1v3h-1zM132 514h1v3h-1zM133 515h1v3h-1zM134 516h1v3h-1zM135 517h1v3h-1zM136 518h1v3h-1zM137 519h1v3h-1zM138 520h1v3h-1zM139 521h1v3h-1zM140 522h1v3h-1zM141 523h1v2h-1zM142 523h1v3h-1zM143 524h1v3h-1zM144 525h1v3h-1zM145 526h1v2h-1zM146 526h1v3h-1zM147 527h1v3h-1zM148 528h1v3h-1zM149 529h1v2h-1zM150 529h1v3h-1zM151 530h1v2h-1zM152 530h1v3h-1zM153 531h1v3h-1zM154 532h1v2h-1zM155 532h1v3h-1zM156 533h1v3h-1zM157 534h1v2h-1zM158 534h1v3h-1zM159 535h1v2h-1zM160 535h1v3h-1zM161 536h1v3h-1zM162 537h1v2h-1zM163 537h1v3h-1zM164 538h1v2h-1zM165 538h1v2h-1zM166 538h1v2h-1zM167 538h1v2h-1zM168 538h1v3h-1zM169 539h1v2h-1zM170 539h1v2h-1zM171 539h1v2h-1zM172 539h1v2h-1zM173 539h1v2h-1zM174 539h1v2h-1zM175 539h1v2h-1zM176 539h1v3h-1zM177 540h1v2h-1zM178 540h1v2h-1zM179 540h1v2h-1zM180 540h1v2h-1zM181 540h1v2h-1zM182 540h1v2h-1zM183 540h1v2h-1zM184 539h1v3h-1zM185 539h1v2h-1zM186 539h1v2h-1zM187 539h1v2h-1zM188 539h1v2h-1zM189 539h1v2h-1zM190 539h1v2h-1zM191 539h1v2h-1zM192 539h1v2h-1zM193 539h1v2h-1zM194 539h1v2h-1zM195 539h1v2h-1zM196 539h1v2h-1zM197 539h1v2h-1zM198 539h1v2h-1zM199 539h1v2h-1zM200 539h1v2h-1zM201 539h1v2h-1zM202 539h1v2h-1zM203 539h1v2h-1zM204 539h1v2h-1zM205 539h1v2h-1zM206 539h1v2h-1zM207 539h1v2h-1zM208 539h1v2h-1zM209 539h1v2h-1zM210 539h1v2h-1zM211 539h1v2h-1zM212 539h1v2h-1zM213 539h1v2h-1zM214 539h1v2h-1zM215 539h1v2h-1zM216 538h1v3h-1zM217 538h1v2h-1zM218 538h1v2h-1zM219 538h1v2h-1zM220 538h1v2h-1zM221 538h1v2h-1zM222 538h1v2h-1zM223 538h1v2h-1zM224 538h1v2h-1zM225 538h1v2h-1zM226 538h1v2h-1zM227 538h1v2h-1zM228 538h1v2h-1zM229 538h1v2h-1zM230 537h1v3h-1zM231 537h1v2h-1zM232 537h1v2h-1zM233 537h1v2h-1zM234 536h1v3h-1zM235 536h1v2h-1zM236 536h1v2h-1zM237 536h1v2h-1zM238 535h1v3h-1zM239 535h1v2h-1zM240 535h1v2h-1zM241 535h1v2h-1zM242 534h1v3h-1zM243 534h1v2h-1zM244 534h1v2h-1zM245 534h1v2h-1zM246 534h1v2h-1zM247 534h1v2h-1zM248 534h1v2h-1zM249 534h1v2h-1zM250 534h1v2h-1zM251 534h1v2h-1zM252 534h1v2h-1zM253 534h1v2h-1zM254 534h1v2h-1zM255 534h1v2h-1zM256 534h1v2h-1zM257 534h1v2h-1zM258 534h1v2h-1zM259 534h1v2h-1zM260 534h1v2h-1zM261 534h1v2h-1zM262 534h1v2h-1zM263 534h1v2h-1zM264 534h1v2h-1zM265 534h1v2h-1zM266 534h1v2h-1zM267 534h1v2h-1zM268 534h1v2h-1zM269 534h1v2h-1zM270 534h1v2h-1zM271 534h1v2h-1zM272 534h1v2h-1zM273 534h1v2h-1zM274 534h1v2h-1zM275 534h1v2h-1zM276 534h1v2h-1zM277 534h1v2h-1zM278 534h1v2h-1zM279 534h1v2h-1zM280 534h1v2h-1zM281 534h1v2h-1zM282 534h1v2h-1zM283 534h1v2h-1zM284 534h1v2h-1zM285 534h1v2h-1zM286 534h1v2h-1zM287 534h1v2h-1zM288 534h1v2h-1zM289 534h1v2h-1zM290 534h1v2h-1zM291 534h1v2h-1zM292 534h1v2h-1zM293 534h1v2h-1zM294 534h1v2h-1zM295 534h1v2h-1zM296 534h1v3h-1zM297 535h1v2h-1zM298 535h1v2h-1zM299 535h1v2h-1zM300 535h1v2h-1zM301 535h1v2h-1zM302 535h1v3h-1zM303 536h1v2h-1zM304 536h1v2h-1zM305 536h1v2h-1zM306 536h1v3h-1zM307 537h1v2h-1zM308 537h1v2h-1zM309 537h1v2h-1zM310 537h1v2h-1zM311 537h1v2h-1zM312 537h1v3h-1zM313 538h1v2h-1zM314 538h1v2h-1zM315 538h1v2h-1zM316 538h1v2h-1zM317 538h1v2h-1zM318 538h1v2h-1zM319 538h1v2h-1zM320 538h1v2h-1zM321 538h1v2h-1zM322 538h1v2h-1zM323 538h1v2h-1zM324 538h1v2h-1zM325 538h1v2h-1zM326 538h1v2h-1zM327 538h1v2h-1zM328 538h1v2h-1zM329 538h1v2h-1zM330 538h1v2h-1zM331 538h1v2h-1zM332 538h1v2h-1zM333 538h1v2h-1zM334 538h1v2h-1zM335 538h1v2h-1zM336 537h1v3h-1zM337 537h1v2h-1zM338 537h1v2h-1zM339 537h1v2h-1zM340 537h1v2h-1zM341 536h1v3h-1zM342 536h1v2h-1zM343 536h1v2h-1zM344 535h1v3h-1zM345 535h1v2h-1zM346 534h1v3h-1zM347 534h1v2h-1zM348 534h1v2h-1zM349 534h1v2h-1zM350 533h1v3h-1zM351 533h1v2h-1zM352 533h1v2h-1zM353 533h1v2h-1zM354 532h1v3h-1zM355 532h1v2h-1zM356 532h1v2h-1zM357 532h1v2h-1zM358 532h1v2h-1zM359 532h1v2h-1zM360 531h1v3h-1zM361 531h1v2h-1zM362 531h1v2h-1zM363 531h1v2h-1zM364 531h1v2h-1zM365 531h1v2h-1zM366 531h1v2h-1zM367 531h1v2h-1zM368 530h1v3h-1zM369 530h1v2h-1zM370 530h1v2h-1zM371 530h1v2h-1zM372 530h1v2h-1zM373 529h1v3h-1zM374 529h1v2h-1zM375 529h1v2h-1zM376 528h1v3h-1zM377 528h1v2h-1zM378 527h1v3h-1zM379 527h1v2h-1zM380 526h1v3h-1zM381 526h1v2h-1zM382 525h1v3h-1zM383 525h1v2h-1zM384 524h1v3h-1zM385 523h1v3h-1zM386 523h1v2h-1zM387 522h1v3h-1zM388 521h1v3h-1zM389 521h1v2h-1zM390 520h1v3h-1zM391 519h1v3h-1zM392 518h1v3h-1zM393 518h1v2h-1zM394 517h1v3h-1zM395 516h1v3h-1zM396 515h1v3h-1zM397 514h1v3h-1zM398 513h1v3h-1zM399 513h1v2h-1zM400 512h1v3h-1zM401 511h1v3h-1zM402 510h1v3h-1zM403 509h1v3h-1zM404 508h1v3h-1zM405 507h1v3h-1zM406 506h1v3h-1zM407 506h1v2h-1zM408 505h1v3h-1zM409 504h1v3h-1zM410 503h1v3h-1zM411 502h1v3h-1zM412 501h1v3h-1zM413 500h1v3h-1zM414 499h1v3h-1zM415 498h1v3h-1zM416 497h1v3h-1zM417 496h1v3h-1zM418 495h1v3h-1zM419 494h1v3h-1zM420 493h1v3h-1zM421 491h1v4h-1zM422 490h1v4h-1zM423 489h1v3h-1zM424 488h1v3h-1zM425 486h1v4h-1zM426 485h1v4h-1zM427 484h1v3h-1zM428 482h1v4h-1zM429 481h1v4h-1zM430 480h1v3h-1zM431 478h1v4h-1zM432 477h1v4h-1zM433 476h1v3h-1zM434 474h1v4h-1zM435 473h1v4h-1zM436 471h1v4h-1zM437 470h1v4h-1zM438 469h1v3h-1zM439 467h1v4h-1zM440 466h1v4h-1zM441 465h1v3h-1zM442 463h1v4h-1zM443 462h1v4h-1zM444 460h1v4h-1zM445 459h1v4h-1zM446 458h1v3h-1zM447 456h1v4h-1zM448 455h1v4h-1zM449 454h1v3h-1zM450 452h1v4h-1zM451 451h1v4h-1zM452 449h1v4h-1zM453 448h1v4h-1zM454 447h1v3h-1zM455 445h1v4h-1zM456 444h1v4h-1zM457 443h1v3h-1zM458 441h1v4h-1zM459 440h1v4h-1zM460 440h1v2h-1zM461 440h1v2h-1zM462 440h1v2h-1zM463 440h1v2h-1zM464 439h1v3h-1zM465 439h1v2h-1zM466 439h1v2h-1zM467 439h1v2h-1zM468 439h1v2h-1zM469 439h1v2h-1zM470 439h1v2h-1zM471 439h1v2h-1zM472 439h1v2h-1zM473 439h1v2h-1zM474 439h1v2h-1zM475 439h1v2h-1zM476 439h1v2h-1zM477 439h1v2h-1zM478 439h1v2h-1zM479 439h1v2h-1zM480 439h1v3h-1zM481 440h1v2h-1zM482 440h1v2h-1zM483 440h1v2h-1zM484 440h1v2h-1zM485 440h1v2h-1zM486 440h1v2h-1zM487 440h1v2h-1zM488 440h1v3h-1zM489 441h1v2h-1zM490 441h1v2h-1zM491 441h1v2h-1zM492 441h1v2h-1zM493 441h1v2h-1zM494 441h1v2h-1zM495 441h1v2h-1zM496 441h1v3h-1zM497 442h1v2h-1zM498 442h1v2h-1zM499 442h1v2h-1zM500 442h1v2h-1zM501 442h1v2h-1zM502 442h1v2h-1zM503 442h1v2h-1zM504 442h1v3h-1zM505 443h1v2h-1zM506 443h1v2h-1zM507 443h1v2h-1zM508 443h1v2h-1zM509 443h1v2h-1zM510 443h1v2h-1zM511 443h1v2h-1zM512 443h1v2h-1zM513 443h1v2h-1zM514 443h1v2h-1zM515 443h1v2h-1zM516 443h1v2h-1zM517 443h1v2h-1zM518 443h1v2h-1zM519 443h1v2h-1zM520 443h1v2h-1zM521 443h1v2h-1zM522 443h1v2h-1zM523 443h1v2h-1zM524 443h1v2h-1zM525 443h1v2h-1zM526 443h1v2h-1zM527 443h1v2h-1zM528 443h1v2h-1zM529 443h1v2h-1zM530 443h1v2h-1zM531 443h1v2h-1zM532 443h1v2h-1zM533 443h1v2h-1zM534 443h1v2h-1zM535 443h1v2h-1zM536 443h1v2h-1zM537 443h1v2h-1zM538 443h1v2h-1zM539 443h1v2h-1zM540 443h1v2h-1zM541 443h1v2h-1zM542 443h1v2h-1zM543 443h1v2h-1zM544 443h1v2h-1zM545 443h1v2h-1zM546 443h1v2h-1zM547 443h1v2h-1zM548 443h1v2h-1zM549 443h1v2h-1zM550 443h1v2h-1zM551 443h1v2h-1zM552 443h1v2h-1zM553 443h1v2h-1zM554 443h1v2h-1zM555 443h1v2h-1zM556 443h1v2h-1zM557 443h1v2h-1zM558 443h1v2h-1zM559 443h1v2h-1zM560 443h1v2h-1zM561 443h1v2h-1zM562 443h1v2h-1zM563 443h1v2h-1zM564 443h1v2h-1zM565 443h1v2h-1zM566 443h1v2h-1zM567 443h1v2h-1zM568 443h1v3h-1zM569 444h1v2h-1zM570 444h1v2h-1zM571 444h1v2h-1zM572 444h1v2h-1zM573 444h1v2h-1zM574 444h1v2h-1zM575 444h1v2h-1zM576 444h1v2h-1zM577 444h1v2h-1zM578 444h1v2h-1zM579 444h1v2h-1zM580 444h1v2h-1zM581 444h1v2h-1zM582 444h1v2h-1zM583 444h1v2h-1zM584 444h1v2h-1zM585 444h1v2h-1zM586 444h1v2h-1zM587 444h1v2h-1zM588 444h1v2h-1zM589 444h1v2h-1zM590 444h1v2h-1zM591 444h1v2h-1zM592 444h1v2h-1zM593 444h1v2h-1zM594 444h1v2h-1zM595 444h1v2h-1zM596 444h1v2h-1zM597 444h1v2h-1zM598 444h1v2h-1zM599 444h1v2h-1zM600 444h1v2h-1zM601 444h1v2h-1zM602 444h1v2h-1zM603 444h1v2h-1zM604 444h1v2h-1zM605 444h1v2h-1zM606 444h1v2h-1zM607 444h1v2h-1zM608 444h1v2h-1zM609 444h1v2h-1zM610 444h1v2h-1zM611 444h1v2h-1zM612 444h1v2h-1zM613 444h1v2h-1zM614 444h1v2h-1zM615 444h1v2h-1zM616 444h1v2h-1zM617 444h1v2h-1zM618 444h1v2h-1zM619 444h1v2h-1zM620 444h1v2h-1zM621 444h1v2h-1zM622 444h1v2h-1zM623 444h1v2h-1zM624 444h1v2h-1zM625 444h1v2h-1zM626 444h1v2h-1zM627 444h1v2h-1zM628 444h1v2h-1zM629 444h1v2h-1zM630 444h1v2h-1zM631 444h1v2h-1zM632 444h1v2h-1zM633 444h1v2h-1zM634 444h1v2h-1zM635 444h1v2h-1zM636 444h1v2h-1zM637 444h1v2h-1zM638 444h1v2h-1zM639 444h1v2h-1zM640 444h1v2h-1zM641 444h1v2h-1zM642 444h1v2h-1zM643 444h1v2h-1zM644 444h1v2h-1zM645 444h1v2h-1zM646 444h1v2h-1zM647 444h1v2h-1zM648 444h1v2h-1zM649 444h1v2h-1zM650 444h1v2h-1zM651 444h1v2h-1zM652 444h1v2h-1zM653 444h1v2h-1zM654 444h1v2h-1zM655 444h1v2h-1zM656 443h1v3h-1zM657 443h1v2h-1zM658 443h1v2h-1zM659 443h1v2h-1zM660 443h1v2h-1zM661 443h1v2h-1zM662 443h1v2h-1zM663 443h1v2h-1zM664 442h1v3h-1zM665 442h1v2h-1zM666 442h1v2h-1zM667 442h1v2h-1zM668 442h1v2h-1zM669 442h1v2h-1zM670 442h1v2h-1zM671 442h1v2h-1zM672 441h1v3h-1zM673 441h1v2h-1zM674 441h1v2h-1zM675 441h1v2h-1zM676 441h1v2h-1z" fill="#00ffff"/>
<path shape-rendering="crispEdges" clip-path="url(#s)" d="M11 442h1v2h-1zM12 442h1v2h-1zM13 442h1v2h-1zM14 442h1v2h-1zM15 442h1v2h-1zM16 441h1v3h-1zM17 441h1v2h-1zM18 441h1v2h-1zM19 441h1v2h-1zM20 441h1v2h-1zM21 441h1v2h-1zM22 441h1v2h-1zM23 441h1v2h-1zM24 440h1v3h-1zM25 440h1v2h-1zM26 440h1v2h-1zM27 440h1v2h-1zM28 440h1v2h-1zM29 440h1v2h-1zM30 440h1v2h-1zM31 440h1v2h-1zM32 439h1v3h-1zM33 439h1v2h-1zM34 439h1v2h-1zM35 439h1v2h-1zM36 439h1v2h-1zM37 439h1v2h-1zM38 439h1v2h-1zM39 439h1v2h-1zM40 438h1v3h-1zM41 438h1v2h-1zM42 438h1v2h-1zM43 438h1v2h-1zM44 438h1v2h-1zM45 438h1v2h-1zM46 438h1v2h-1zM47 438h1v2h-1zM48 438h1v2h-1zM49 438h1v2h-1zM50 438h1v2h-1zM51 438h1v2h-1zM52 438h1v2h-1zM53 438h1v2h-1zM54 438h1v2h-1zM55 438h1v2h-1zM56 438h1v2h-1zM57 438h1v2h-1zM58 438h1v2h-1zM59 438h1v2h-1zM60 438h1v2h-1zM61 438h1v2h-1zM62 438h1v2h-1zM63 438h1v2h-1zM64 438h1v3h-1zM65 439h1v2h-1zM66 439h1v2h-1zM67 439h1v2h-1zM68 439h1v2h-1zM69 439h1v2h-1zM70 439h1v2h-1zM71 439h1v2h-1zM72 439h1v3h-1zM73 440h1v2h-1zM74 440h1v2h-1zM75 440h1v2h-1zM76 440h1v2h-1zM77 440h1v2h-1zM78 440h1v2h-1zM79 440h1v2h-1zM80 440h1v3h-1zM81 441h1v2h-1zM82 441h1v2h-1zM83 441h1v2h-1zM84 441h1v2h-1zM85 441h1v2h-1zM86 441h1v2h-1zM87 441h1v2h-1zM88 441h1v3h-1zM89 442h1v2h-1zM90 442h1v2h-1zM91 442h1v2h-1zM92 442h1v2h-1zM93 442h1v2h-1zM94 442h1v3h-1zM95 443h1v2h-1zM96 443h1v2h-1zM97 443h1v2h-1zM98 443h1v3h-1zM99 444h1v2h-1zM100 444h1v2h-1zM101 444h1v2h-1zM102 444h1v3h-1zM103 445h1v2h-1zM104 445h1v2h-1zM105 445h1v2h-1zM106 445h1v3h-1zM107 446h1v2h-1zM108 446h1v2h-1zM109 446h1v3h-1zM110 447h1v2h-1zM111 447h1v2h-1zM112 447h1v3h-1zM113 448h1v2h-1zM114 448h1v3h-1zM115 449h1v2h-1zM116 449h1v2h-1zM117 449h1v2h-1zM118 449h1v3h-1zM119 450h1v2h-1zM120 450h1v2h-1zM121 450h1v2h-1zM122 450h1v3h-1zM123 451h1v2h-1zM124 451h1v2h-1zM125 451h1v3h-1zM126 452h1v2h-1zM127 452h1v2h-1zM128 452h1v3h-1zM129 453h1v2h-1zM130 453h1v3h-1zM131 454h1v2h-1zM132 454h1v2h-1zM133 454h1v3h-1zM134 455h1v2h-1zM135 455h1v2h-1zM136 455h1v3h-1zM137 456h1v2h-1zM138 456h1v3h-1zM139 457h1v2h-1zM140 457h1v2h-1zM141 457h1v3h-1zM142 458h1v2h-1zM143 458h1v3h-1zM144 459h1v2h-1zM145 459h1v3h-1zM146 460h1v2h-1zM147 460h1v3h-1zM148 461h1v2h-1zM149 461h1v3h-1zM150 462h1v2h-1zM151 462h1v2h-1zM152 462h1v3h-1zM153 463h1v2h-1zM154 463h1v3h-1zM155 464h1v2h-1zM156 464h1v2h-1zM157 464h1v3h-1zM158 465h1v2h-1zM159 465h1v2h-1zM160 465h1v3h-1zM161 466h1v2h-1zM162 466h1v3h-1zM163 467h1v2h-1zM164 467h1v2h-1zM165 467h1v3h-1zM166 468h1v2h-1zM167 468h1v3h-1zM168 469h1v2h-1zM169 469h1v3h-1zM170 470h1v2h-1zM171 470h1v3h-1zM172 471h1v2h-1zM173 471h1v3h-1zM174 472h1v2h-1zM175 472h1v2h-1zM176 472h1v3h-1zM177 473h1v2h-1zM178 473h1v3h-1zM179 474h1v2h-1zM180 474h1v2h-1zM181 474h1v3h-1zM182 475h1v2h-1zM183 475h1v2h-1zM184 475h1v3h-1zM185 476h1v2h-1zM186 476h1v3h-1zM187 477h1v2h-1zM188 477h1v2h-1zM189 477h1v3h-1zM190 478h1v2h-1zM191 478h1v3h-1zM192 479h1v2h-1zM193 479h1v3h-1zM194 480h1v2h-1zM195 480h1v3h-1zM196 481h1v2h-1zM197 481h1v3h-1zM198 482h1v2h-1zM199 482h1v3h-1zM200 483h1v2h-1zM201 483h1v3h-1zM202 484h1v2h-1zM203 484h1v3h-1zM204 485h1v3h-1zM205 486h1v2h-1zM206 486h1v3h-1zM207 487h1v2h-1zM208 487h1v3h-1zM209 488h1v3h-1zM210 489h1v2h-1zM211 489h1v3h-1zM212 490h1v3h-1zM213 491h1v2h-1zM214 491h1v3h-1zM215 492h1v2h-1zM216 492h1v3h-1zM217 493h1v3h-1zM218 494h1v2h-1zM219 494h1v3h-1zM220 495h1v3h-1zM221 496h1v2h-1zM222 496h1v3h-1zM223 497h1v2h-1zM224 497h1v3h-1zM225 498h1v3h-1zM226 499h1v2h-1zM227 499h1v3h-1zM228 500h1v3h-1zM229 501h1v2h-1zM230 501h1v3h-1zM231 502h1v2h-1zM232 502h1v3h-1zM233 503h1v3h-1zM234 504h1v2h-1zM235 504h1v3h-1zM236 505h1v3h-1zM237 506h1v2h-1zM238 506h1v3h-1zM239 507h1v2h-1zM240 507h1v3h-1zM241 508h1v3h-1zM242 509h1v2h-1zM243 509h1v3h-1zM244 510h1v3h-1zM245 511h1v3h-1zM246 512h1v3h-1zM247 513h1v2h-1zM248 513h1v3h-1zM249 514h1v3h-1zM250 515h1v3h-1zM251 516h1v3h-1zM252 517h1v3h-1zM253 518h1v3h-1zM254 519h1v3h-1zM255 520h1v2h-1zM256 520h1v3h-1zM257 521h1v3h-1zM258 522h1v3h-1zM259 523h1v3h-1zM260 524h1v3h-1zM261 525h1v2h-1zM262 525h1v3h-1zM263 526h1v2h-1zM264 526h1v3h-1zM265 527h1v3h-1zM266 528h1v2h-1zM267 528h1v3h-1zM268 529h1v3h-1zM269 530h1v2h-1zM270 530h1v3h-1zM271 531h1v2h-1zM272 531h1v3h-1zM273 532h1v3h-1zM274 533h1v2h-1zM275 533h1v3h-1zM276 534h1v2h-1zM277 534h1v2h-1zM278 534h1v3h-1zM279 535h1v2h-1zM280 535h1v2h-1zM281 535h1v2h-1zM282 535h1v3h-1zM283 536h1v2h-1zM284 536h1v2h-1zM285 536h1v2h-1zM286 536h1v2h-1zM287 536h1v2h-1zM288 536h1v3h-1zM289 537h1v2h-1zM290 537h1v2h-1zM291 537h1v2h-1zM292 537h1v2h-1zM293 537h1v2h-1zM294 537h1v2h-1zM295 537h1v2h-1zM296 537h1v3h-1zM297 538h1v2h-1zM298 538h1v2h-1zM299 538h1v2h-1zM300 538h1v2h-1zM301 538h1v2h-1zM302 538h1v2h-1zM303 538h1v2h-1zM304 538h1v3h-1zM305 539h1v2h-1zM306 539h1v2h-1zM307 539h1v2h-1zM308 539h1v2h-1zM309 539h1v2h-1zM310 539h1v2h-1zM311 539h1v2h-1zM312 539h1v3h-1zM313 540h1v2h-1zM314 540h1v2h-1zM315 540h1v2h-1zM316 540h1v2h-1zM317 540h1v2h-1zM318 540h1v2h-1zM319 540h1v2h-1zM320 540h1v3h-1zM321 541h1v2h-1zM322 541h1v2h-1zM323 541h1v2h-1zM324 541h1v2h-1zM325 541h1v2h-1zM326 541h1v2h-1zM327 541h1v2h-1zM328 541h1v3h-1zM329 542h1v2h-1zM330 542h1v2h-1zM331 542h1v2h-1zM332 542h1v2h-1zM333 542h1v2h-1zM334 542h1v2h-1zM335 542h1v2h-1zM336 542h1v3h-1zM337 543h1v2h-1zM338 543h1v2h-1zM339 543h1v2h-1zM340 543h1v2h-1zM341 543h1v2h-1zM342 543h1v2h-1zM343 543h1v2h-1zM344 543h1v3h-1zM345 544h1v2h-1zM346 544h1v2h-1zM347 544h1v2h-1zM348 544h1v2h-1zM349 544h1v2h-1zM350 544h1v2h-1zM351 544h1v2h-1zM352 544h1v2h-1zM353 544h1v2h-1zM354 544h1v2h-1zM355 544h1v2h-1zM356 544h1v2h-1zM357 544h1v2h-1zM358 544h1v2h-1zM359 544h1v2h-1zM360 544h1v2h-1zM361 544h1v2h-1zM362 544h1v2h-1zM363 544h1v2h-1zM364 544h1v2h-1zM365 544h1v2h-1zM366 544h1v2h-1zM367 544h1v2h-1zM368 544h1v3h-1zM369 545h1v2h-1zM370 545h1v2h-1zM371 545h1v2h-1zM372 545h1v2h-1zM373 545h1v2h-1zM374 545h1v2h-1zM375 545h1v2h-1zM376 544h1v3h-1zM377 544h1v2h-1zM378 544h1v2h-1zM379 544h1v2h-1zM380 544h1v2h-1zM381 544h1v2h-1zM382 544h1v2h-1zM383 544h1v2h-1zM384 544h1v2h-1zM385 544h1v2h-1zM386 544h1v2h-1zM387 544h1v2h-1zM388 544h1v2h-1zM389 544h1v2h-1zM390 544h1v2h-1zM391 544h1v2h-1zM392 544h1v2h-1zM393 544h1v2h-1zM394 544h1v2h-1zM395 544h1v2h-1zM396 544h1v2h-1zM397 544h1v2h-1zM398 544h1v2h-1zM399 544h1v2h-1zM400 543h1v3h-1zM401 543h1v2h-1zM402 543h1v2h-1zM403 543h1v2h-1zM404 543h1v2h-1zM405 543h1v2h-1zM406 543h1v2h-1zM407 543h1v2h-1zM408 543h1v2h-1zM409 543h1v2h-1zM410 543h1v2h-1zM411 543h1v2h-1zM412 543h1v2h-1zM413 543h1v2h-1zM414 543h1v2h-1zM415 543h1v2h-1zM416 542h1v3h-1zM417 542h1v2h-1zM418 542h1v2h-1zM419 542h1v2h-1zM420 542h1v2h-1zM421 542h1v2h-1zM422 542h1v2h-1zM423 542h1v2h-1zM424 541h1v3h-1zM425 541h1v2h-1zM426 541h1v2h-1zM427 541h1v2h-1zM428 541h1v2h-1zM429 541h1v2h-1zM430 541h1v2h-1zM431 541h1v2h-1zM432 540h1v3h-1zM433 540h1v2h-1zM434 540h1v2h-1zM435 540h1v2h-1zM436 540h1v2h-1zM437 539h1v3h-1zM438 539h1v2h-1zM439 539h1v2h-1zM440 538h1v3h-1zM441 538h1v2h-1zM442 537h1v3h-1zM443 537h1v2h-1zM444 537h1v2h-1zM445 537h1v2h-1zM446 536h1v3h-1zM447 536h1v2h-1zM448 536h1v2h-1zM449 536h1v2h-1zM450 535h1v3h-1zM451 535h1v2h-1zM452 535h1v2h-1zM453 534h1v3h-1zM454 534h1v2h-1zM455 534h1v2h-1zM456 533h1v3h-1zM457 533h1v2h-1zM458 532h1v3h-1zM459 532h1v2h-1zM460 532h1v2h-1zM461 532h1v2h-1zM462 531h1v3h-1zM463 531h1v2h-1zM464 531h1v2h-1zM465 531h1v2h-1zM466 530h1v3h-1zM467 530h1v2h-1zM468 530h1v2h-1zM469 529h1v3h-1zM470 529h1v2h-1zM471 529h1v2h-1zM472 528h1v3h-1zM473 528h1v2h-1zM474 527h1v3h-1zM475 527h1v2h-1zM476 527h1v2h-1zM477 527h1v2h-1zM478 526h1v3h-1zM479 526h1v2h-1zM480 526h1v2h-1zM481 526h1v2h-1zM482 525h1v3h-1zM483 525h1v2h-1zM484 525h1v2h-1zM485 525h1v2h-1zM486 524h1v3h-1zM487 524h1v2h-1zM488 524h1v2h-1zM489 524h1v2h-1zM490 523h1v3h-1zM491 523h1v2h-1zM492 523h1v2h-1zM493 522h1v3h-1zM494 522h1v2h-1zM495 522h1v2h-1zM496 521h1v3h-1zM497 521h1v2h-1zM498 520h1v3h-1zM499 520h1v2h-1zM500 520h1v2h-1zM501 520h1v2h-1zM502 519h1v3h-1zM503 519h1v2h-1zM504 519h1v2h-1zM505 519h1v2h-1zM506 518h1v3h-1zM507 518h1v2h-1zM508 518h1v2h-1zM509 518h1v2h-1zM510 517h1v3h-1zM511 517h1v2h-1zM512 517h1v2h-1zM513 517h1v2h-1zM514 516h1v3h-1zM515 516h1v2h-1zM516 515h1v3h-1zM517 515h1v2h-1zM518 514h1v3h-1zM519 514h1v2h-1zM520 513h1v3h-1zM521 512h1v3h-1zM522 512h1v2h-1zM523 511h1v3h-1zM524 510h1v3h-1zM525 509h1v3h-1zM526 508h1v3h-1zM527 508h1v2h-1zM528 507h1v3h-1zM529 506h1v3h-1zM530 505h1v3h-1zM531 504h1v3h-1zM532 504h1v2h-1zM533 503h1v3h-1zM534 503h1v2h-1zM535 503h1v2h-1zM536 502h1v3h-1zM537 502h1v2h-1zM538 501h1v3h-1zM539 501h1v2h-1zM540 500h1v3h-1zM541 500h1v2h-1zM542 499h1v3h-1zM543 499h1v2h-1zM544 498h1v3h-1zM545 497h1v3h-1zM546 497h1v2h-1zM547 496h1v3h-1zM548 495h1v3h-1zM549 495h1v2h-1zM550 494h1v3h-1zM551 494h1v2h-1zM552 493h1v3h-1zM553 492h1v3h-1zM554 492h1v2h-1zM555 491h1v3h-1zM556 490h1v3h-1zM557 489h1v3h-1zM558 488h1v3h-1zM559 488h1v2h-1zM560 487h1v3h-1zM561 486h1v3h-1zM562 485h1v3h-1zM563 484h1v3h-1zM564 484h1v2h-1zM565 483h1v3h-1zM566 483h1v2h-1zM567 483h1v2h-1zM568 482h1v3h-1zM569 482h1v2h-1zM570 481h1v3h-1zM571 481h1v2h-1zM572 481h1v2h-1zM573 480h1v3h-1zM574 480h1v2h-1zM575 480h1v2h-1zM576 479h1v3h-1zM577 479h1v2h-1zM578 478h1v3h-1zM579 478h1v2h-1zM580 477h1v3h-1zM581 477h1v2h-1zM582 476h1v3h-1zM583 476h1v2h-1zM584 475h1v3h-1zM585 474h1v3h-1zM586 474h1v2h-1zM587 473h1v3h-1zM588 473h1v2h-1zM589 472h1v3h-1zM590 472h1v2h-1zM591 471h1v3h-1zM592 471h1v2h-1zM593 470h1v3h-1zM594 470h1v2h-1zM595 469h1v3h-1zM596 468h1v3h-1zM597 468h1v2h-1zM598 467h1v3h-1zM599 466h1v3h-1zM600 465h1v3h-1zM601 465h1v2h-1zM602 464h1v3h-1zM603 463h1v3h-1zM604 463h1v2h-1zM605 462h1v3h-1zM606 462h1v2h-1zM607 461h1v3h-1zM608 461h1v2h-1zM609 460h1v3h-1zM610 460h1v2h-1zM611 459h1v3h-1zM612 458h1v3h-1zM613 458h1v2h-1zM614 457h1v3h-1zM615 457h1v2h-1zM616 456h1v3h-1zM617 455h1v3h-1zM618 455h1v2h-1zM619 454h1v3h-1zM620 454h1v2h-1zM621 453h1v3h-1zM622 453h1v2h-1zM623 452h1v3h-1zM624 452h1v2h-1zM625 451h1v3h-1zM626 451h1v2h-1zM627 450h1v3h-1zM628 450h1v2h-1zM629 450h1v2h-1zM630 449h1v3h-1zM631 449h1v2h-1zM632 449h1v2h-1zM633 449h1v2h-1zM634 448h1v3h-1zM635 448h1v2h-1zM636 448h1v2h-1zM637 448h1v2h-1zM638 447h1v3h-1zM639 447h1v2h-1zM640 447h1v2h-1zM641 447h1v2h-1zM642 446h1v3h-1zM643 446h1v2h-1zM644 446h1v2h-1zM645 445h1v3h-1zM646 445h1v2h-1zM647 444h1v3h-1zM648 444h1v2h-1zM649 443h1v3h-1zM650 443h1v2h-1zM651 442h1v3h-1zM652 442h1v2h-1zM653 442h1v2h-1zM654 441h1v3h-1zM655 441h1v2h-1zM656 441h1v2h-1zM657 441h1v2h-1zM658 440h1v3h-1zM659 440h1v2h-1zM660 440h1v2h-1zM661 440h1v2h-1zM662 440h1v2h-1zM663 440h1v2h-1zM664 439h1v3h-1zM665 439h1v2h-1zM666 439h1v2h-1zM667 439h1v2h-1zM668 439h1v2h-1zM669 439h1v2h-1zM670 439h1v2h-1zM671 439h1v2h-1zM672 439h1v2h-1zM673 439h1v2h-1zM674 439h1v2h-1zM675 439h1v2h-1zM676 439h1v2h-1z" fill="#ffff00"/>
<g shape-rendering="crispEdges">
<path class="b" d="M11.5 292.5V34.5H678.5V292.5ZM11.5 422.5V294.5H678.5V422.5ZM11.5 552.5V424.5H678.5V552.5Z"/>
<path class="b" d="M679 58.5H681M679 91.5H681M679 124.5H681M679 157.5H681M679 190.5H681M679 223.5H681M679 256.5H681M679 289.5H681M679 494.5H681M679 296.5H680M679 421.5H680M679 426.5H680M679 551.5H680M12.5 553V556M76.5 553V556M140.5 553V556M204.5 553V556M268.5 553V556M332.5 553V556M396.5 553V556M460.5 553V556M524.5 553V556M588.5 553V556M652.5 553V556"/>
</g>
<path d="M12 546.5L17.3 552H12Z" fill="#8b9bb0"/>
<text x="29.3" y="23" font-size="12.6" textLength="56.2" lengthAdjust="spacingAndGlyphs" style="fill:#0a0a14;stroke:none" xml:space="preserve">USDJPY,H1</text>
<path d="M15 41H22.4L18.7 44.9Z" fill="#fff"/>
<text x="27.5" y="46" font-size="9.6" textLength="49.3" lengthAdjust="spacingAndGlyphs" xml:space="preserve">USDJPY,H1</text>
<text x="84.5" y="46" font-size="9.6" textLength="32" lengthAdjust="spacingAndGlyphs" xml:space="preserve">144.487</text>
<text x="120.6" y="46" font-size="9.6" textLength="32" lengthAdjust="spacingAndGlyphs" xml:space="preserve">144.535</text>
<text x="156.7" y="46" font-size="9.6" textLength="32" lengthAdjust="spacingAndGlyphs" xml:space="preserve">144.394</text>
<text x="192.8" y="46" font-size="9.6" textLength="32" lengthAdjust="spacingAndGlyphs" xml:space="preserve">144.402</text>
<text x="16.2" y="307" font-size="9.6" textLength="31.8" lengthAdjust="spacingAndGlyphs" xml:space="preserve">RSI(14)</text>
<text x="51.0" y="307" font-size="9.6" textLength="32.9" lengthAdjust="spacingAndGlyphs" xml:space="preserve">55.2777</text>
<text x="16.2" y="437.2" font-size="9.6" textLength="27.6" lengthAdjust="spacingAndGlyphs" xml:space="preserve">R1(26)</text>
<text x="46.0" y="437.2" font-size="9.6" textLength="18.2" lengthAdjust="spacingAndGlyphs" xml:space="preserve">75.8</text>
<text x="69.0" y="437.2" font-size="9.6" textLength="27.6" lengthAdjust="spacingAndGlyphs" xml:space="preserve">R1(52)</text>
<text x="98.7" y="437.2" font-size="9.6" textLength="19.2" lengthAdjust="spacingAndGlyphs" xml:space="preserve">96.7</text>
<text x="684.3" y="61.8" font-size="9.6" textLength="32.3" lengthAdjust="spacingAndGlyphs" xml:space="preserve">115.760</text>
<text x="684.3" y="94.8" font-size="9.6" textLength="32.3" lengthAdjust="spacingAndGlyphs" xml:space="preserve">115.595</text>
<text x="684.3" y="127.8" font-size="9.6" textLength="32.3" lengthAdjust="spacingAndGlyphs" xml:space="preserve">115.435</text>
<text x="684.3" y="160.8" font-size="9.6" textLength="32.3" lengthAdjust="spacingAndGlyphs" xml:space="preserve">115.270</text>
<text x="684.3" y="193.8" font-size="9.6" textLength="32.3" lengthAdjust="spacingAndGlyphs" xml:space="preserve">115.110</text>
<text x="684.3" y="226.8" font-size="9.6" textLength="32.3" lengthAdjust="spacingAndGlyphs" xml:space="preserve">114.945</text>
<text x="684.3" y="259.8" font-size="9.6" textLength="32.3" lengthAdjust="spacingAndGlyphs" xml:space="preserve">114.785</text>
<text x="684.3" y="292.8" font-size="9.6" textLength="32.3" lengthAdjust="spacingAndGlyphs" xml:space="preserve">114.620</text>
<text x="681.4" y="304.8" font-size="9.6" textLength="14.3" lengthAdjust="spacingAndGlyphs" xml:space="preserve">100</text>
<text x="681.4" y="336.8" font-size="9.6" textLength="9.5" lengthAdjust="spacingAndGlyphs" xml:space="preserve">70</text>
<text x="681.4" y="361.8" font-size="9.6" textLength="9.5" lengthAdjust="spacingAndGlyphs" xml:space="preserve">50</text>
<text x="681.4" y="387.8" font-size="9.6" textLength="9.5" lengthAdjust="spacingAndGlyphs" xml:space="preserve">30</text>
<text x="681.4" y="418.8" font-size="9.6" textLength="4.6" lengthAdjust="spacingAndGlyphs" xml:space="preserve">0</text>
<text x="682.2" y="434.8" font-size="9.6" textLength="14.3" lengthAdjust="spacingAndGlyphs" xml:space="preserve">120</text>
<text x="681.4" y="440.8" font-size="9.6" textLength="14.3" lengthAdjust="spacingAndGlyphs" xml:space="preserve">100</text>
<text x="681.4" y="451.8" font-size="9.6" textLength="9.5" lengthAdjust="spacingAndGlyphs" xml:space="preserve">80</text>
<text x="681.4" y="469.8" font-size="9.6" textLength="9.5" lengthAdjust="spacingAndGlyphs" xml:space="preserve">50</text>
<text x="682.6" y="497.8" font-size="9.6" textLength="17" lengthAdjust="spacingAndGlyphs" xml:space="preserve">0.00</text>
<text x="681.0" y="526.8" font-size="9.6" textLength="12.6" lengthAdjust="spacingAndGlyphs" xml:space="preserve">-50</text>
<text x="681.0" y="543.8" font-size="9.6" textLength="12.6" lengthAdjust="spacingAndGlyphs" xml:space="preserve">-80</text>
<text x="682.2" y="548.8" font-size="9.6" textLength="17.4" lengthAdjust="spacingAndGlyphs" xml:space="preserve">-100</text>
<text x="11.2" y="565" font-size="9.6" textLength="47" lengthAdjust="spacingAndGlyphs" xml:space="preserve">3 Mar 2022</text>
<text x="75.2" y="565" font-size="9.6" textLength="49.5" lengthAdjust="spacingAndGlyphs" xml:space="preserve">3 Mar 18:00</text>
<text x="139.2" y="565" font-size="9.6" textLength="49.5" lengthAdjust="spacingAndGlyphs" xml:space="preserve">4 Mar 02:00</text>
<text x="203.2" y="565" font-size="9.6" textLength="49.5" lengthAdjust="spacingAndGlyphs" xml:space="preserve">4 Mar 10:00</text>
<text x="267.2" y="565" font-size="9.6" textLength="49.5" lengthAdjust="spacingAndGlyphs" xml:space="preserve">4 Mar 18:00</text>
<text x="331.2" y="565" font-size="9.6" textLength="49.5" lengthAdjust="spacingAndGlyphs" xml:space="preserve">7 Mar 02:00</text>
<text x="395.2" y="565" font-size="9.6" textLength="49.5" lengthAdjust="spacingAndGlyphs" xml:space="preserve">7 Mar 10:00</text>
<text x="459.2" y="565" font-size="9.6" textLength="49.5" lengthAdjust="spacingAndGlyphs" xml:space="preserve">7 Mar 18:00</text>
<text x="523.2" y="565" font-size="9.6" textLength="49.5" lengthAdjust="spacingAndGlyphs" xml:space="preserve">8 Mar 02:00</text>
<text x="587.2" y="565" font-size="9.6" textLength="49.5" lengthAdjust="spacingAndGlyphs" xml:space="preserve">8 Mar 10:00</text>
<text x="651.2" y="565" font-size="9.6" textLength="49.5" lengthAdjust="spacingAndGlyphs" xml:space="preserve">8 Mar 18:00</text>
<g fill="none">
<rect x="10.5" y="11.5" width="11" height="8" fill="#fffffa" stroke="#4a8cff"/>
<rect x="10.5" y="11.5" width="11" height="8" stroke="#3f7f86" stroke-dasharray="1 2" stroke-opacity=".8"/>
<path d="M12.3 15.6L13.6 14.2L14.8 15.4M16.2 14L17.6 16L19.6 15.2" stroke="#3b7bf0" stroke-width="1.2"/>
<rect x="13.5" y="16.5" width="10" height="8" fill="#fffffa" stroke="#4a8cff"/>
<rect x="13.5" y="16.5" width="10" height="8" stroke="#3f7f86" stroke-dasharray="1 2" stroke-opacity=".8"/>
<path d="M15.5 19.4L17.3 22.4L19.5 19.3L21.4 22.4" stroke="#3b7bf0" stroke-width="1.2"/>
</g>
<rect x="624.5" y="9.5" width="31" height="17" rx="2.6" fill="url(#bt)" stroke="#56637e" stroke-width="1"/>
<rect x="625.5" y="10.5" width="29" height="15" rx="1.6" fill="none" stroke="#fff" stroke-opacity="0.6" stroke-width="1"/>
<rect x="658.5" y="9.5" width="31" height="17" rx="2.6" fill="url(#bt)" stroke="#56637e" stroke-width="1"/>
<rect x="659.5" y="10.5" width="29" height="15" rx="1.6" fill="none" stroke="#fff" stroke-opacity="0.6" stroke-width="1"/>
<rect x="692.5" y="9.5" width="31" height="17" rx="2.6" fill="url(#cl)" stroke="#43192a" stroke-width="1"/>
<rect x="693.5" y="10.5" width="29" height="15" rx="1.6" fill="none" stroke="#fff" stroke-opacity="0.45" stroke-width="1"/>
<rect x="634.5" y="17.5" width="10" height="4" rx="0.8" fill="#fff" stroke="#454d66" stroke-width="1"/>
<rect x="668.5" y="13.5" width="10" height="8" rx="0.8" fill="#fff" stroke="#454d66" stroke-width="1"/>
<rect x="671.5" y="16.5" width="4" height="2" fill="#9fb4d2" stroke="#454d66" stroke-width="1"/>
<path d="M702.4 13.2H706L707.6 15.3L709.2 13.2H712.8L709.5 17.4L712.9 21.7H709.3L707.6 19.5L705.9 21.7H702.3L705.7 17.4Z" fill="#fff" stroke="#3d4258" stroke-width="1" stroke-linejoin="round"/>
</svg></body></html>
